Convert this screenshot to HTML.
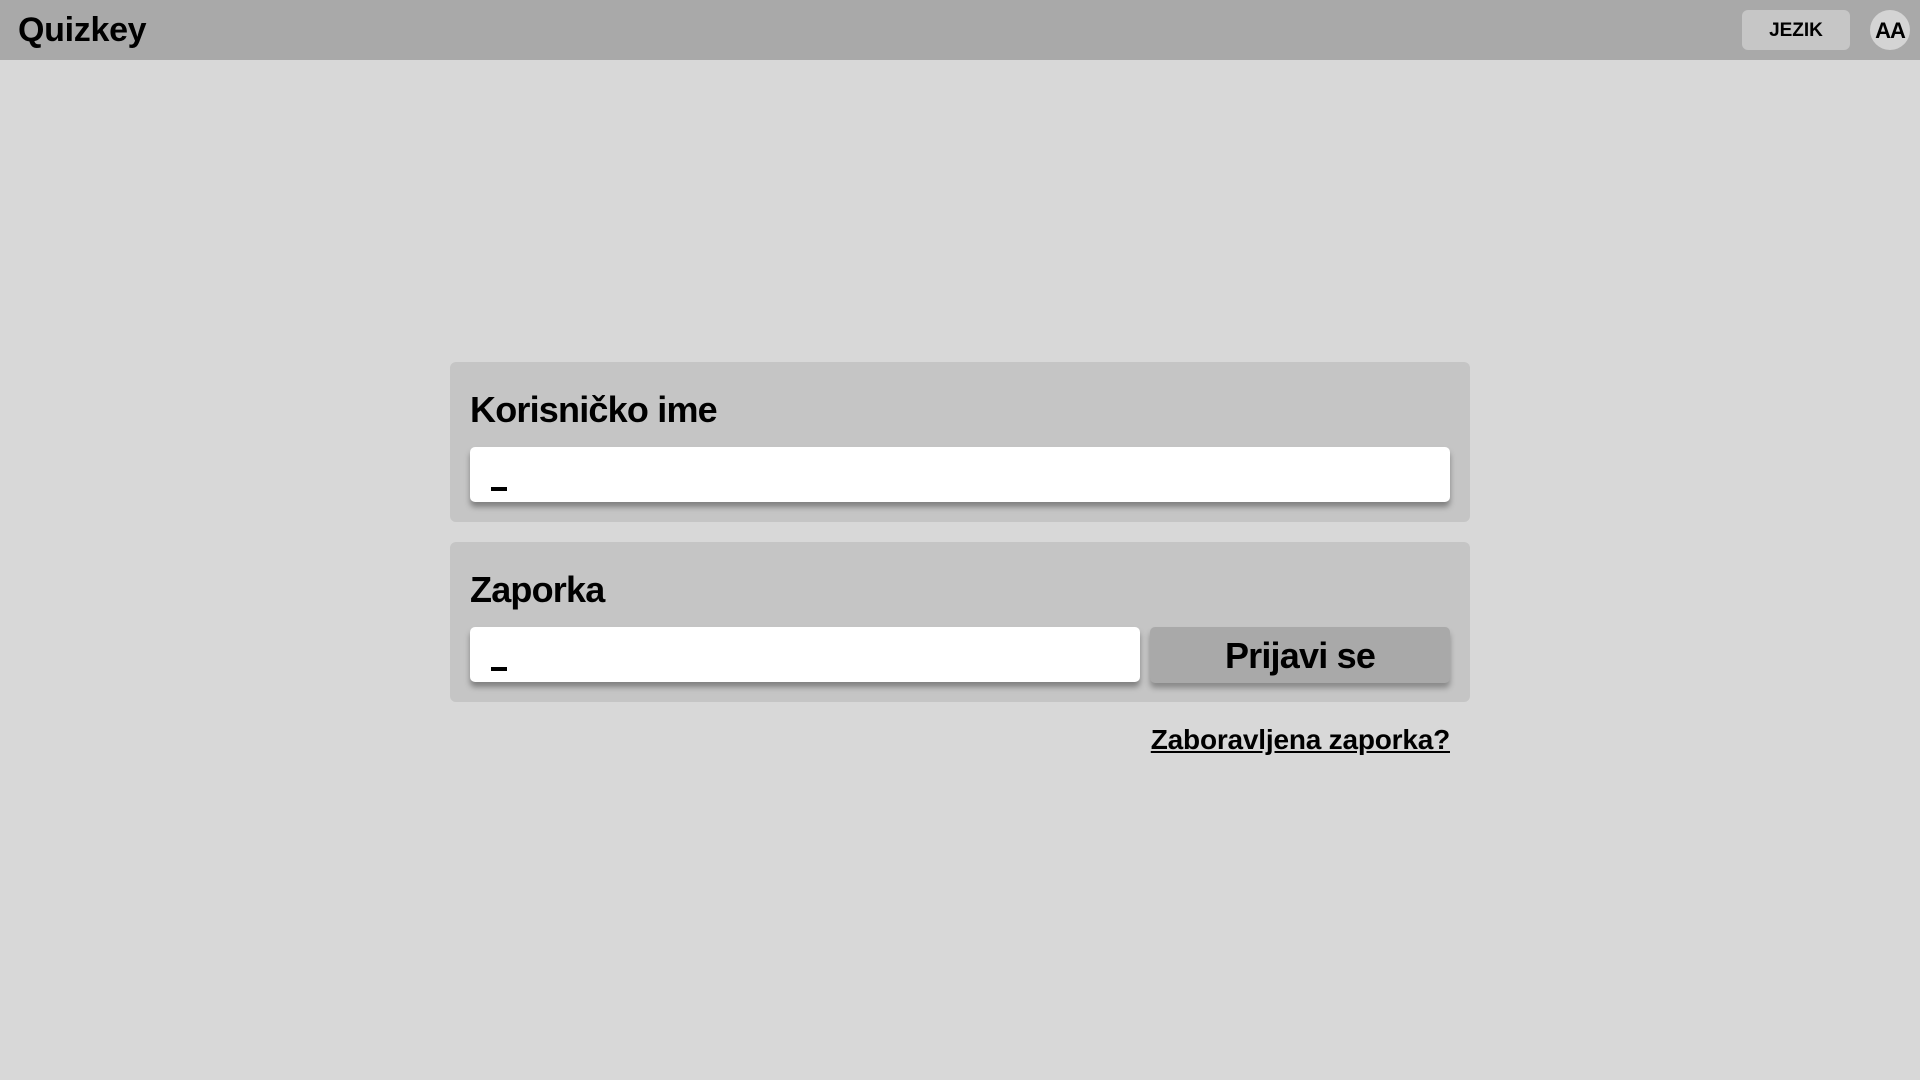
<!DOCTYPE html>
<html><head><meta charset="utf-8"><style>
*{margin:0;padding:0;box-sizing:border-box}
body{width:1920px;height:1080px;background:#d8d8d8;font-family:"Liberation Sans",sans-serif;position:relative;overflow:hidden;color:#000}
.hdr{position:absolute;left:0;top:0;width:1920px;height:60px;background:#a9a9a9}
.title{position:absolute;left:18px;top:11px;font-size:34px;font-weight:bold;letter-spacing:-0.3px}
.jez{position:absolute;left:1742px;top:10px;width:108px;height:40px;background:#c6c6c6;border-radius:6px;font-weight:bold;font-size:19px;text-align:center;line-height:41px}
.aa{position:absolute;left:1870px;top:10px;width:40px;height:40px;border-radius:50%;background:#d4d4d4;font-weight:bold;font-size:22px;text-align:center;line-height:41px;letter-spacing:-1px}
.panel{position:absolute;left:450px;width:1020px;height:160px;background:#c5c5c5;border-radius:6px}
.lbl{position:absolute;left:20px;font-size:36px;font-weight:bold;letter-spacing:-0.8px}
.inp{position:absolute;left:20px;height:55px;background:#fff;border-radius:5px;box-shadow:0 5px 6px rgba(0,0,0,0.35)}
.inp i{position:absolute;left:21px;top:40px;width:16px;height:4px;background:#000}
.btn{position:absolute;left:700px;top:85px;width:300px;height:56px;background:#a9a9a9;border-radius:5px;box-shadow:0 5px 6px rgba(0,0,0,0.3);text-align:center;line-height:57px;font-size:36px;font-weight:bold;letter-spacing:-0.8px}
.link{position:absolute;right:470px;top:724px;font-size:28px;font-weight:bold;text-decoration:underline;letter-spacing:-0.2px}
</style></head><body>
<div class="hdr"><div class="title">Quizkey</div><div class="jez">JEZIK</div><div class="aa">AA</div></div>
<div class="panel" style="top:362px">
<div class="lbl" style="top:27px">Korisničko ime</div>
<div class="inp" style="top:85px;width:980px"><i></i></div>
</div>
<div class="panel" style="top:542px">
<div class="lbl" style="top:27px">Zaporka</div>
<div class="inp" style="top:85px;width:670px"><i></i></div>
<div class="btn">Prijavi se</div>
</div>
<div class="link">Zaboravljena zaporka?</div>
</body></html>
